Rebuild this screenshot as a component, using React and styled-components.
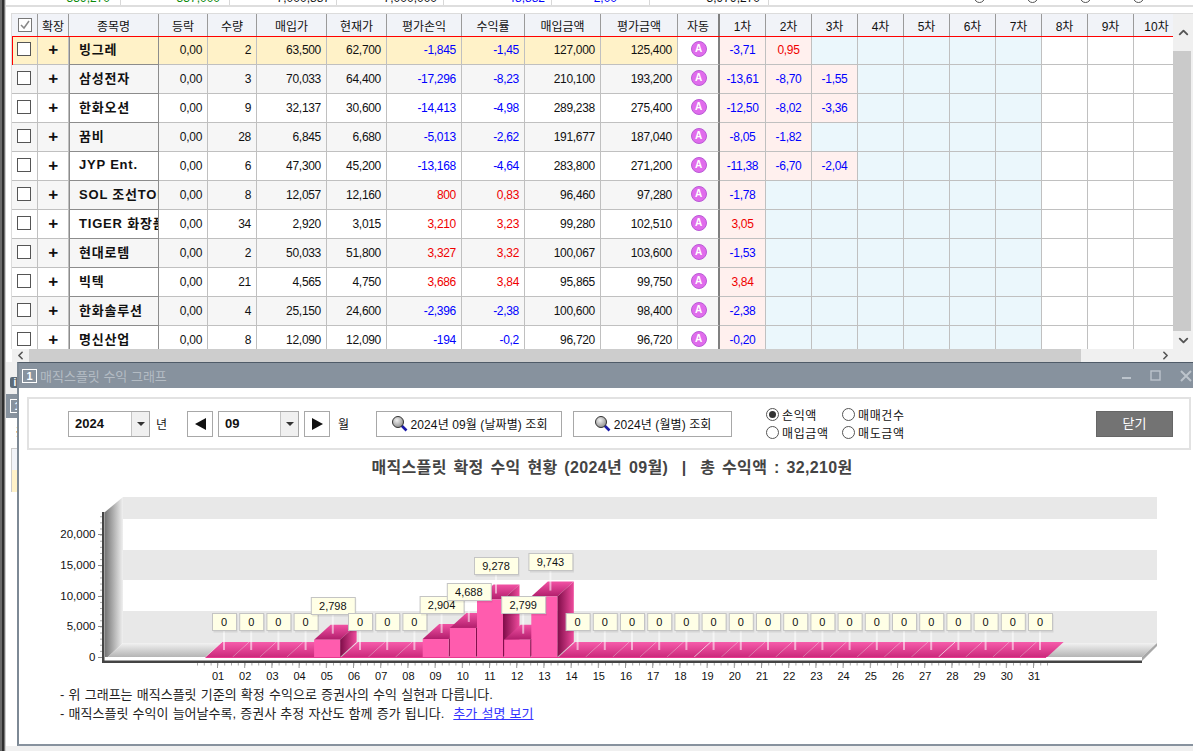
import React from "react";
import styled, { createGlobalStyle } from "styled-components";
import { ChevronUp, ChevronDown, ChevronLeft, ChevronRight } from "lucide-react";

const GlobalStyle = createGlobalStyle`
  html, body { margin: 0; padding: 0; background: #fff; }
  * { box-sizing: border-box; }
  body {
    font-family: "Liberation Sans", "Noto Sans CJK KR", sans-serif;
    font-size: 12px;
    color: #111;
  }
`;

const COLUMNS = "26px 31px 90px 49px 49px 70px 60px 75px 63px 76px 77px 42px repeat(10, 46px)";
const STEP_COUNT = 10;

const HEADERS = ["확장", "종목명", "등락", "수량", "매입가", "현재가", "평가손익", "수익률", "매입금액", "평가금액", "자동"];

const STOCKS = [
  { name: "빙그레", qty: "2", buy: "63,500", cur: "62,700", pl: "-1,845", ret: "-1,45", cost: "127,000", val: "125,400", steps: ["-3,71", "0,95"] },
  { name: "삼성전자", qty: "3", buy: "70,033", cur: "64,400", pl: "-17,296", ret: "-8,23", cost: "210,100", val: "193,200", steps: ["-13,61", "-8,70", "-1,55"] },
  { name: "한화오션", qty: "9", buy: "32,137", cur: "30,600", pl: "-14,413", ret: "-4,98", cost: "289,238", val: "275,400", steps: ["-12,50", "-8,02", "-3,36"] },
  { name: "꿈비", qty: "28", buy: "6,845", cur: "6,680", pl: "-5,013", ret: "-2,62", cost: "191,677", val: "187,040", steps: ["-8,05", "-1,82"] },
  { name: "JYP Ent.", qty: "6", buy: "47,300", cur: "45,200", pl: "-13,168", ret: "-4,64", cost: "283,800", val: "271,200", steps: ["-11,38", "-6,70", "-2,04"] },
  { name: "SOL 조선TOP", qty: "8", buy: "12,057", cur: "12,160", pl: "800", ret: "0,83", cost: "96,460", val: "97,280", steps: ["-1,78"] },
  { name: "TIGER 화장품", qty: "34", buy: "2,920", cur: "3,015", pl: "3,210", ret: "3,23", cost: "99,280", val: "102,510", steps: ["3,05"] },
  { name: "현대로템", qty: "2", buy: "50,033", cur: "51,800", pl: "3,327", ret: "3,32", cost: "100,067", val: "103,600", steps: ["-1,53"] },
  { name: "빅텍", qty: "21", buy: "4,565", cur: "4,750", pl: "3,686", ret: "3,84", cost: "95,865", val: "99,750", steps: ["3,84"] },
  { name: "한화솔루션", qty: "4", buy: "25,150", cur: "24,600", pl: "-2,396", ret: "-2,38", cost: "100,600", val: "98,400", steps: ["-2,38"] },
  { name: "명신산업", qty: "8", buy: "12,090", cur: "12,090", pl: "-194", ret: "-0,2", cost: "96,720", val: "96,720", steps: ["-0,20"] },
];

const SUMMARY = [
  { width: 109, pad: 10, text: "339,270", color: "#0a8a0a" },
  { width: 109, pad: 9, text: "337,000", color: "#0a8a0a" },
  { width: 107, pad: 6, text: "7,000,887", color: "#111" },
  { width: 107, pad: 6, text: "7,000,000", color: "#111" },
  { width: 108, pad: 6, text: "48,882", color: "#0000ff" },
  { width: 98, pad: 32, text: "2,00", color: "#0000ff" },
  { width: 119, pad: 8, text: "3,979,270", color: "#111" },
];

const Page = styled.div`
  position: relative;
  width: 1193px;
  height: 751px;
  overflow: hidden;
  display: flex;
  background: #fff;
`;

const EdgeRail = styled.div`
  flex: 0 0 6px;
  background: linear-gradient(90deg, #6a6a6a 0 2px, #2f2f2f 2px 4px, #777 4px 5px, #d0d0d0 5px 6px);
`;

const Main = styled.div`
  flex: 1;
  min-width: 0;
  display: flex;
  flex-direction: column;
`;

const SummaryStrip = styled.div`
  height: 7px;
  flex: none;
  display: flex;
  overflow: hidden;
  padding-left: 6px;
  border-bottom: 2px solid #dedede;
`;

const SummaryCell = styled.div`
  flex: 0 0 ${(p) => p.$width}px;
  text-align: right;
  padding-right: ${(p) => p.$pad}px;
  border-right: 1px solid #d8d8d8;
  color: ${(p) => p.$color};
  line-height: 14px;
  margin-top: -9px;
  height: 20px;
`;

const SummaryRadios = styled.div`
  display: flex;
  gap: 42px;
  margin-left: 205px;
`;

const SummaryRadio = styled.span`
  display: block;
  width: 11px;
  height: 11px;
  margin-top: -8px;
  border: 1px solid #555;
  border-radius: 50%;
`;

const GridFrame = styled.div`
  flex: none;
  margin: 6px 0 0 5px;
  width: 1182px;
  height: 336px;
  display: flex;
  border-left: 1px solid #dcdcdc;
  border-top: 1px solid #dcdcdc;
`;

const GridViewport = styled.div`
  width: 1161px;
  overflow: hidden;
  background: #fff;
`;

const HeaderRow = styled.div`
  display: grid;
  grid-template-columns: ${COLUMNS};
  height: 22px;
  width: 1180px;
`;

const HeaderCell = styled.div`
  display: flex;
  align-items: center;
  justify-content: center;
  background: #f1f3f8;
  border-right: 1px solid ${(p) => (p.$strong ? "#808080" : "#9a9a9a")};
  border-right-width: ${(p) => (p.$strong ? 2 : 1)}px;
`;

const DataRow = styled.div`
  position: relative;
  display: grid;
  grid-template-columns: ${COLUMNS};
  height: 29px;
  width: 1180px;

  &::after {
    content: "";
    display: ${(p) => (p.$selected ? "block" : "none")};
    position: absolute;
    inset: 0 -4px -1px 0;
    border: 1px solid #f00;
    pointer-events: none;
  }
`;

const Cell = styled.div`
  display: flex;
  align-items: center;
  justify-content: ${(p) => p.$justify || "flex-end"};
  padding: ${(p) => (p.$justify ? "0" : "0 5px 0 0")};
  background: ${(p) => p.$bg};
  color: ${(p) => p.$color || "#111"};
  letter-spacing: -0.3px;
  border-right: 1px solid #c0c0c0;
  border-bottom: 1px solid #c0c0c0;
  overflow: hidden;
  white-space: nowrap;
`;

const NameCell = styled(Cell)`
  justify-content: flex-start;
  padding: 0 0 3px 9px;
  font-size: 13px;
  font-weight: 700;
  letter-spacing: 0.8px;
  border-left: 1px solid #8c8c8c;
  border-right: 1px solid #8c8c8c;
  border-bottom-color: #8c8c8c;
`;

const AutoCell = styled(Cell)`
  justify-content: center;
  padding: 0 0 2px 1px;
  border-right: 2px solid #808080;
`;

const AutoBadge = styled.span`
  width: 16px;
  height: 16px;
  border-radius: 50%;
  background: #e06cec;
  border: 1px solid #b95ad6;
  color: #fff;
  font-size: 10px;
  font-weight: 700;
  line-height: 14px;
  text-align: center;
  letter-spacing: 0;
`;

const StepCell = styled(Cell)`
  justify-content: center;
  padding: 0;
`;

const CheckBox = styled.span`
  display: block;
  width: 14px;
  height: 14px;
  margin: 0 1px 3px 0;
  background: #fff;
  border: 1px solid #555;
`;

const HeaderCheck = styled(CheckBox)`
  margin: 0;
  color: #888;
  border-color: #777;
`;

const PlusMark = styled.span`
  font-size: 17px;
  font-weight: 700;
  line-height: 1;
  margin-bottom: 2px;
`;

const VScroll = styled.div`
  flex: 1;
  display: flex;
  flex-direction: column;
  background: #f0f0f0;
`;

const ScrollButton = styled.div`
  flex: 0 0 ${(p) => p.$size}px;
  display: flex;
  align-items: center;
  justify-content: center;
  color: #555;
`;

const VThumb = styled.div`
  flex: 1;
  background: #cacaca;
  margin-right: 2px;
`;

const HScroll = styled.div`
  flex: none;
  margin-left: 6px;
  height: 13px;
  display: flex;
  background: #f0f0f0;
  color: #555;
`;

const HThumb = styled.div`
  flex: 0 0 1052px;
  background: #cdcdcd;
`;

const HEnd = styled.div`
  flex: 1;
  display: flex;
  align-items: center;
  justify-content: flex-end;
  padding-right: 21px;
`;

const BackToolbar = styled.div`
  flex: 0 0 32px;
  background: #f0f0f0;
  padding: 15px 0 0 4px;
`;

const InfoIcon = styled.span`
  display: block;
  width: 10px;
  height: 11px;
  border-radius: 2px;
  background: #5d6b78;
  color: #fff;
  font-size: 10px;
  font-weight: 700;
  line-height: 11px;
  text-align: center;
`;

const BackTitle = styled.div`
  flex: 0 0 24px;
  background: #87929e;
  padding: 5px 0 0 4px;
`;

const WindowNumber = styled.span`
  display: block;
  width: 15px;
  height: 14px;
  border: 1px solid #fff;
  color: #fff;
  font-size: 11px;
  font-weight: 700;
  line-height: 12px;
  text-align: center;
`;

const BackBody = styled.div`
  flex: 1;
  background: #fff;
  padding: 8px 0 0 5px;
`;

const BackLabel = styled.div`
  height: 22px;
  padding-left: 4px;
  line-height: 14px;
`;

const BackTableHead = styled.div`
  height: 22px;
  background: #f1f3f8;
  border-left: 1px solid #ccc;
  border-top: 1px solid #ccc;
`;

const BackTableRow = styled.div`
  height: 22px;
  background: #fff2c8;
  border-left: 1px solid #ccc;
`;

const StatusStrip = styled.div`
  flex: 0 0 5px;
  background: #f0f0f0;
`;

/* 떠 있는 수익 그래프 창 */
const ChartWindow = styled.section`
  position: absolute;
  left: 17px;
  top: 362px;
  width: 1190px;
  height: 384px;
  display: flex;
  flex-direction: column;
  background: #fff;
  border-left: 2px solid #7d8995;
  border-top: 1px solid #4f5b68;
  border-bottom: 2px solid #87929e;
`;

const TitleBar = styled.header`
  flex: 0 0 25px;
  display: flex;
  align-items: center;
  gap: 3px;
  padding-left: 3px;
  background: #87929e;
  color: #b4bcc4;
`;

const TitleText = styled.span`
  font-size: 13px;
`;

const WindowControls = styled.div`
  position: absolute;
  top: 7px;
  left: 1103px;
`;

const ToolPanel = styled.div`
  flex: 0 0 53px;
  display: flex;
  align-items: center;
  margin: 9px 0 0 8px;
  width: 1164px;
  padding-left: 39px;
  border: 2px solid #e2e2e2;
`;

const Group = styled.div`
  display: flex;
  align-items: center;
  gap: ${(p) => p.$gap || 5}px;
  margin-left: ${(p) => p.$offset || 0}px;
`;

const Combo = styled.div`
  width: ${(p) => p.$width}px;
  height: 26px;
  display: flex;
  border: 1px solid #a8a8a8;
  background: #fff;
`;

const ComboValue = styled.span`
  flex: 1;
  padding-left: 6px;
  font-size: 13px;
  font-weight: 700;
  line-height: 24px;
`;

const ComboArrow = styled.span`
  flex: 0 0 18px;
  display: flex;
  align-items: center;
  justify-content: center;
  background: #f0f0f0;
  border-left: 1px solid #c4c4c4;

  &::before {
    content: "";
    border: 4px solid transparent;
    border-top: 4px solid #333;
    border-bottom: 0;
  }
`;

const StepButton = styled.div`
  width: 26px;
  height: 26px;
  display: flex;
  align-items: center;
  justify-content: center;
  border: 1px solid #a8a8a8;
  background: #fff;

  &::before {
    content: "";
    border-top: 6px solid transparent;
    border-bottom: 6px solid transparent;
    border-left: ${(p) => (p.$dir === "next" ? "11px solid #111" : "0")};
    border-right: ${(p) => (p.$dir === "prev" ? "11px solid #111" : "0")};
  }
`;

const UnitLabel = styled.span`
  margin-left: ${(p) => p.$offset || 0}px;
`;

const QueryButton = styled.div`
  width: ${(p) => p.$width}px;
  height: 26px;
  display: flex;
  align-items: center;
  justify-content: center;
  gap: 3px;
  border: 1px solid #a8a8a8;
  background: #fff;
  letter-spacing: 0.1px;
`;

const RadioGrid = styled.div`
  display: grid;
  grid-template-columns: 76px 70px;
  grid-auto-rows: 18px;
  margin-left: 34px;
`;

const RadioItem = styled.label`
  display: flex;
  align-items: center;
  gap: 3px;
  letter-spacing: 0.6px;
`;

const RadioDot = styled.span`
  flex: none;
  width: 13px;
  height: 13px;
  border-radius: 50%;
  border: 1px solid #555;
  display: flex;
  align-items: center;
  justify-content: center;

  &::after {
    content: "";
    display: ${(p) => (p.$on ? "block" : "none")};
    width: 7px;
    height: 7px;
    border-radius: 50%;
    background: #333;
  }
`;

const CloseButton = styled.div`
  width: 77px;
  height: 26px;
  margin: 0 16px 0 auto;
  background: #737373;
  border: 1px solid #666;
  color: #fff;
  font-size: 13px;
  line-height: 24px;
  text-align: center;
`;

const ChartTitle = styled.h2`
  flex: 0 0 36px;
  margin: 0;
  width: 1186px;
  text-align: center;
  font-size: 16px;
  font-weight: 700;
  letter-spacing: 0.35px;
  word-spacing: 2px;
  line-height: 36px;
  color: #444;
  white-space: pre;
`;

const Plot = styled.svg`
  display: block;
  flex: none;
`;

const Notes = styled.div`
  padding: 2px 0 0 41px;
  font-size: 13px;
  word-spacing: 0.6px;
  line-height: 19px;
  color: #222;
`;

const NoteLink = styled.span`
  margin-left: 9px;
  color: #3333ff;
  text-decoration: underline;
`;

const AxisText = styled.text`
  font-family: "Liberation Sans", sans-serif;
  font-size: ${(p) => p.$size || 11}px;
  fill: #111;
`;

const profit = (v) => (v.startsWith("-") ? "#0000ff" : "#f00000");

const rowTone = (i) => (i === 0 ? "#fff2c8" : i % 2 === 1 ? "#f6f6f6" : "#fff");

function SearchIcon() {
  return (
    <svg width="17" height="17" viewBox="0 0 17 17">
      <defs>
        <radialGradient id="lens" cx="40%" cy="35%" r="70%">
          <stop offset="0" stopColor="#f0f0f0" />
          <stop offset="1" stopColor="#8a8a8a" />
        </radialGradient>
      </defs>
      <path d="M10.5 10.5 15.5 15.5" stroke="#1a1aa8" strokeWidth="2.6" />
      <circle cx="7" cy="7" r="5.5" fill="url(#lens)" stroke="#333" strokeWidth="1" />
    </svg>
  );
}

function StockRow({ stock, index }) {
  const tone = rowTone(index);
  const auto = index === 0 ? "#fff" : tone;
  return (
    <DataRow $selected={index === 0}>
      <Cell $bg={tone} $justify="center"><CheckBox /></Cell>
      <Cell $bg={tone} $justify="center"><PlusMark>+</PlusMark></Cell>
      <NameCell $bg={tone}>{stock.name}</NameCell>
      <Cell $bg={tone}>0,00</Cell>
      <Cell $bg={tone}>{stock.qty}</Cell>
      <Cell $bg={tone}>{stock.buy}</Cell>
      <Cell $bg={tone}>{stock.cur}</Cell>
      <Cell $bg={tone} $color={profit(stock.pl)}>{stock.pl}</Cell>
      <Cell $bg={tone} $color={profit(stock.ret)}>{stock.ret}</Cell>
      <Cell $bg={tone}>{stock.cost}</Cell>
      <Cell $bg={tone}>{stock.val}</Cell>
      <AutoCell $bg={auto}><AutoBadge>A</AutoBadge></AutoCell>
      {Array.from({ length: STEP_COUNT }, (_, n) => {
        const v = stock.steps[n];
        const bg = v ? "#fff0ee" : n < 7 ? "#ebf7fc" : "#fff";
        return <StepCell key={n} $bg={bg} $color={v && profit(v)}>{v}</StepCell>;
      })}
    </DataRow>
  );
}

// 수익 그래프 좌표
const CAT = 27.15;
const LABEL_STEP = 27.2;
const X0 = 205.5;
const DX = 16.5;
const DY = 15;
const BASE = 657;
const BACK = BASE - DY;
const PX_PER_WON = 31 / 5000;
const DAYS = Array.from({ length: 31 }, (_, i) => String(i + 1).padStart(2, "0"));

const PROFITS = {
  4: { value: 2798, text: "2,798", top: 597 },
  8: { value: 2904, text: "2,904", top: 596 },
  9: { value: 4688, text: "4,688", top: 583 },
  10: { value: 9278, text: "9,278", top: 557 },
  11: { value: 2799, text: "2,799", top: 596 },
  12: { value: 9743, text: "9,743", top: 553 },
};

function Bar({ i }) {
  const x = X0 + CAT * i;
  const item = PROFITS[i];
  if (!item) {
    return (
      <g>
        <polygon points={`${x},${BASE} ${x + CAT},${BASE} ${x + CAT + DX},${BACK} ${x + DX},${BACK}`} fill="url(#ribbon)" />
        <line x1={x} y1={BASE} x2={x + DX} y2={BACK} stroke="#fff" strokeOpacity={i % 9 === 0 ? 0.6 : 0.2} />
      </g>
    );
  }
  const w = 26;
  const top = BASE - item.value * PX_PER_WON;
  return (
    <g>
      <polygon points={`${x},${top} ${x + w},${top} ${x + w + DX},${top - DY} ${x + DX},${top - DY}`} fill="url(#barTop)" />
      <polygon points={`${x + w},${top} ${x + w + DX},${top - DY} ${x + w + DX},${BACK} ${x + w},${BASE}`} fill="url(#barSide)" />
      <rect x={x} y={top} width={w} height={BASE - top} fill="#ff5cae" />
    </g>
  );
}

function ValueLabel({ i }) {
  const cx = 224 + LABEL_STEP * i;
  const item = PROFITS[i];
  const text = item ? item.text : "0";
  const top = item ? item.top : 613;
  const w = item ? 44 : 24;
  const stemEnd = item ? BASE - item.value * PX_PER_WON - 6 : 650;
  return (
    <g>
      <line x1={cx} y1={top + 18} x2={cx} y2={stemEnd} stroke="#fff" strokeOpacity="0.55" strokeWidth="2" />
      <rect x={cx - w / 2 + 1.5} y={top + 1.5} width={w} height={18} fill="#000" fillOpacity="0.08" />
      <rect x={cx - w / 2 + 0.5} y={top + 0.5} width={w} height={17} fill="#ffffe6" stroke="#c4c4c4" />
      <AxisText x={cx} y={top + 13} textAnchor="middle">{text}</AxisText>
    </g>
  );
}

function ProfitChart() {
  const yLabels = [["20,000", 534], ["15,000", 565], ["10,000", 596], ["5,000", 626], ["0", 657]];
  const yMinor = Array.from({ length: 24 }, (_, n) => 657 - n * 6.12);
  const xMinor = Array.from({ length: 126 }, (_, n) => 197 + n * 6.8);
  return (
    <Plot width="1174" height="197" viewBox="19 486 1174 197">
      <defs>
        <linearGradient id="wall" x1="0" x2="1" y1="0" y2="0">
          <stop offset="0" stopColor="#767676" />
          <stop offset="1" stopColor="#f0f0f0" />
        </linearGradient>
        <linearGradient id="floor" x1="0" x2="0" y1="0" y2="1">
          <stop offset="0" stopColor="#f2f2f2" />
          <stop offset="1" stopColor="#b4b4b4" />
        </linearGradient>
        <linearGradient id="ribbon" x1="0" x2="0" y1="0" y2="1">
          <stop offset="0" stopColor="#f65cab" />
          <stop offset="1" stopColor="#cc2a7c" />
        </linearGradient>
        <linearGradient id="barTop" x1="0" x2="0" y1="0" y2="1">
          <stop offset="0" stopColor="#f252a4" />
          <stop offset="1" stopColor="#b11e6c" />
        </linearGradient>
        <linearGradient id="barSide" x1="0" x2="1" y1="0" y2="0">
          <stop offset="0" stopColor="#7e0c48" />
          <stop offset="1" stopColor="#ee4a9c" />
        </linearGradient>
      </defs>

      <rect x="123" y="497" width="1034" height="22" fill="#e8e8e8" />
      <rect x="123" y="550" width="1034" height="30" fill="#e8e8e8" />
      <rect x="123" y="611" width="1034" height="32" fill="#e8e8e8" />

      <polygon points="105,512 123,497 123,643 108,657 105,657" fill="url(#wall)" />
      <polygon points="108,657 123,643 1157,643 1142,657" fill="url(#floor)" />
      <polygon points="1142,657 1157,643 1157,646 1142,661" fill="#a8a8a8" />

      {DAYS.map((_, i) => <Bar key={i} i={i} />)}
      <rect x={X0} y={BASE} width={CAT * 31 - 1} height="1" fill="#e8388f" />
      {DAYS.map((_, i) => <ValueLabel key={i} i={i} />)}

      <rect x="102" y="512" width="2.5" height="151" fill="#444" />
      <rect x="102" y="660.5" width="1040" height="2.5" fill="#444" />

      {yMinor.map((y) => <rect key={y} x="100" y={y} width="2" height="1" fill="#aaa" />)}
      {yLabels.map(([text, y]) => (
        <g key={text}>
          <rect x="98" y={y} width="4" height="1" fill="#888" />
          <AxisText x="95.5" y={y + 4} textAnchor="end" $size={11.5}>{text}</AxisText>
        </g>
      ))}

      {xMinor.map((x) => <rect key={x} x={x} y="663" width="1" height="2.5" fill="#aaa" />)}
      {DAYS.map((day, i) => (
        <g key={day}>
          <rect x={217 + LABEL_STEP * i} y="663" width="1" height="5" fill="#999" />
          <AxisText x={218 + LABEL_STEP * i} y={680} textAnchor="middle">{day}</AxisText>
        </g>
      ))}
    </Plot>
  );
}

export default function App() {
  return (
    <Page>
      <GlobalStyle />
      <EdgeRail />
      <Main>
        <SummaryStrip>
          {SUMMARY.map((s) => (
            <SummaryCell key={s.text} $width={s.width} $pad={s.pad} $color={s.color}>{s.text}</SummaryCell>
          ))}
          <SummaryRadios>
            <SummaryRadio />
            <SummaryRadio />
            <SummaryRadio />
            <SummaryRadio />
          </SummaryRadios>
        </SummaryStrip>

        <GridFrame>
          <GridViewport>
            <HeaderRow>
              <HeaderCell>
                <HeaderCheck>
                  <svg width="12" height="12" viewBox="0 0 12 12" fill="none" stroke="currentColor" strokeWidth="1.5">
                    <path d="M2 6 5 9 10 2" />
                  </svg>
                </HeaderCheck>
              </HeaderCell>
              {HEADERS.map((h) => (
                <HeaderCell key={h} $strong={h === "자동"}>{h}</HeaderCell>
              ))}
              {Array.from({ length: STEP_COUNT }, (_, n) => (
                <HeaderCell key={n}>{n + 1}차</HeaderCell>
              ))}
            </HeaderRow>
            {STOCKS.map((s, i) => <StockRow key={s.name} stock={s} index={i} />)}
          </GridViewport>
          <VScroll>
            <ScrollButton $size={37}><ChevronUp size={15} strokeWidth={3} /></ScrollButton>
            <VThumb />
            <ScrollButton $size={18}><ChevronDown size={15} strokeWidth={3} /></ScrollButton>
          </VScroll>
        </GridFrame>
        <HScroll>
          <ScrollButton $size={17}><ChevronLeft size={13} strokeWidth={3} /></ScrollButton>
          <HThumb />
          <HEnd><ChevronRight size={13} strokeWidth={3} /></HEnd>
        </HScroll>

        <BackToolbar><InfoIcon>i</InfoIcon></BackToolbar>
        <BackTitle><WindowNumber>1</WindowNumber></BackTitle>
        <BackBody>
          <BackLabel>※</BackLabel>
          <BackTableHead />
          <BackTableRow />
        </BackBody>
        <StatusStrip />
      </Main>

      <ChartWindow>
        <TitleBar>
          <WindowNumber>1</WindowNumber>
          <TitleText>매직스플릿 수익 그래프</TitleText>
          <WindowControls>
            <svg width="72" height="12" viewBox="0 0 72 12" fill="none" stroke="#bcc4cc" strokeWidth="2">
              <path d="M0 8H9" />
              <rect x="29" y="1" width="9" height="9" strokeWidth="1.4" />
              <path d="M59 1 69 11M69 1 59 11" />
            </svg>
          </WindowControls>
        </TitleBar>

        <ToolPanel>
          <Group $gap={6}>
            <Combo $width={82}><ComboValue>2024</ComboValue><ComboArrow /></Combo>
            <span>년</span>
          </Group>
          <Group $offset={20}>
            <StepButton $dir="prev" />
            <Combo $width={81}><ComboValue>09</ComboValue><ComboArrow /></Combo>
            <StepButton $dir="next" />
            <UnitLabel $offset={3}>월</UnitLabel>
          </Group>
          <Group $offset={27} $gap={11}>
            <QueryButton $width={186}><SearchIcon />2024년 09월 (날짜별) 조회</QueryButton>
            <QueryButton $width={159}><SearchIcon />2024년 (월별) 조회</QueryButton>
          </Group>
          <RadioGrid>
            <RadioItem><RadioDot $on />손익액</RadioItem>
            <RadioItem><RadioDot />매매건수</RadioItem>
            <RadioItem><RadioDot />매입금액</RadioItem>
            <RadioItem><RadioDot />매도금액</RadioItem>
          </RadioGrid>
          <CloseButton>닫기</CloseButton>
        </ToolPanel>

        <ChartTitle>{"매직스플릿 확정 수익 현황 (2024년 09월)  |  총 수익액 : 32,210원"}</ChartTitle>
        <ProfitChart />

        <Notes>
          <div>- 위 그래프는 매직스플릿 기준의 확정 수익으로 증권사의 수익 실현과 다릅니다.</div>
          <div>- 매직스플릿 수익이 늘어날수록, 증권사 추정 자산도 함께 증가 됩니다.<NoteLink>추가 설명 보기</NoteLink></div>
        </Notes>
      </ChartWindow>
    </Page>
  );
}
